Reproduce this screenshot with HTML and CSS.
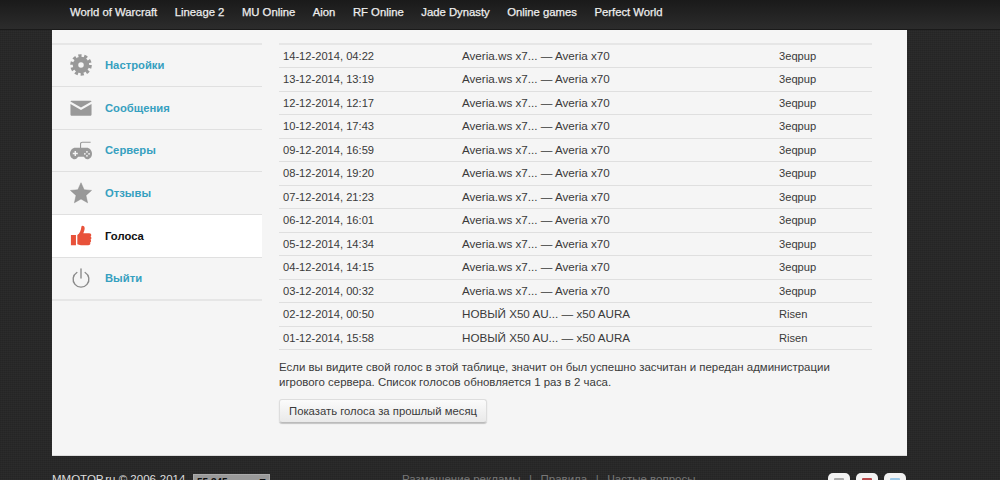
FILE: index.html
```html
<!DOCTYPE html>
<html lang="ru">
<head>
<meta charset="utf-8">
<title>MMOTOP</title>
<link rel="stylesheet" href="styles.css">
</head>
<body>
<header class="topbar">
  <nav class="topnav">
    <a>World of Warcraft</a><a>Lineage 2</a><a>MU Online</a><a>Aion</a><a>RF Online</a><a>Jade Dynasty</a><a>Online games</a><a>Perfect World</a>
  </nav>
</header>
<main class="panel">
  <aside class="side">
    <a class="side-item"><svg class="ico" viewBox="0 0 24 24"><circle cx="12" cy="12" r="9.900" fill="none" stroke="#999" stroke-width="3.800" stroke-dasharray="3.400 2.820"/><circle cx="12" cy="12" r="6" fill="none" stroke="#999" stroke-width="6"/></svg><span>Настройки</span></a>
    <a class="side-item"><svg class="ico" viewBox="0 0 24 24"><path fill="#999" d="M2 4h20c.8 0 1.500.4 1.500.8L12 11.500.5 4.800C.5 4.400 1.200 4 2 4zM.5 7.500 12 14.300l11.500-6.800V19c0 .8-.7 1.500-1.500 1.500H2C1.200 20.500.5 19.800.5 19z"/></svg><span>Сообщения</span></a>
    <a class="side-item"><svg class="ico" viewBox="0 0 24 24"><path fill="none" stroke="#999" stroke-width="1.200" d="M11.500 10V5.500c0-1.200.8-2 2-2h9"/><path fill="#999" fill-rule="evenodd" d="M6 9.500h12c3.500 0 6 3 6 6.500s-2.500 6-5 6c-2 0-2.800-1.500-4-2.700H9c-1.200 1.200-2 2.700-4 2.700-2.500 0-5-2.500-5-6s2.500-6.500 6-6.500zM5 13v2H3v1.500h2v2h1.500v-2h2V15h-2v-2zm13.500 0a1 1 0 1 0 0 2 1 1 0 0 0 0-2zm-2.300 2.200a1 1 0 1 0 0 2 1 1 0 0 0 0-2zm4.600 0a1 1 0 1 0 0 2 1 1 0 0 0 0-2zm-2.300 2.200a1 1 0 1 0 0 2 1 1 0 0 0 0-2z"/></svg><span>Серверы</span></a>
    <a class="side-item"><svg class="ico" viewBox="0 0 24 24"><path fill="#999" stroke="#888" stroke-width=".5" d="M12 .8l3.400 7.600 8.100.8-6.100 5.400 1.800 8.100-7.200-4.200-7.200 4.200 1.800-8.100L.5 9.200l8.100-.8z"/></svg><span>Отзывы</span></a>
    <a class="side-item active"><svg class="ico" viewBox="0 0 24 24"><path fill="#e8523a" d="M1 11h5.500v11H1zM8 11c2.500-2 4-5 4.500-9.500.2-1.300 3.500-1 3.500 2 0 2-.8 3.500-1.500 5.500h6.500c1.500 0 2.200 1 2.200 2 0 .8-.4 1.300-.8 1.600.7.400 1 1 1 1.700 0 .8-.5 1.400-1 1.700.4.400.6.900.6 1.500 0 .8-.5 1.300-1.100 1.600.2.300.3.700.3 1 0 1.200-1 1.900-2.200 1.900H12c-1.700 0-2.800-.7-4-1z"/></svg><span>Голоса</span></a>
    <a class="side-item"><svg class="ico" viewBox="0 0 24 24"><path fill="none" stroke="#8a8a8a" stroke-width="1.500" stroke-linecap="round" d="M12 2v10M7.500 6A8.600 8.600 0 1 0 16.500 6"/></svg><span>Выйти</span></a>
  </aside>
  <section class="content">
    <table class="votes">
      <tr><td>14-12-2014, 04:22</td><td class="srv">Averia.ws x7... — Averia x70</td><td>3eqpup</td></tr>
      <tr><td>13-12-2014, 13:19</td><td class="srv">Averia.ws x7... — Averia x70</td><td>3eqpup</td></tr>
      <tr><td>12-12-2014, 12:17</td><td class="srv">Averia.ws x7... — Averia x70</td><td>3eqpup</td></tr>
      <tr><td>10-12-2014, 17:43</td><td class="srv">Averia.ws x7... — Averia x70</td><td>3eqpup</td></tr>
      <tr><td>09-12-2014, 16:59</td><td class="srv">Averia.ws x7... — Averia x70</td><td>3eqpup</td></tr>
      <tr><td>08-12-2014, 19:20</td><td class="srv">Averia.ws x7... — Averia x70</td><td>3eqpup</td></tr>
      <tr><td>07-12-2014, 21:23</td><td class="srv">Averia.ws x7... — Averia x70</td><td>3eqpup</td></tr>
      <tr><td>06-12-2014, 16:01</td><td class="srv">Averia.ws x7... — Averia x70</td><td>3eqpup</td></tr>
      <tr><td>05-12-2014, 14:34</td><td class="srv">Averia.ws x7... — Averia x70</td><td>3eqpup</td></tr>
      <tr><td>04-12-2014, 14:15</td><td class="srv">Averia.ws x7... — Averia x70</td><td>3eqpup</td></tr>
      <tr><td>03-12-2014, 00:32</td><td class="srv">Averia.ws x7... — Averia x70</td><td>3eqpup</td></tr>
      <tr><td>02-12-2014, 00:50</td><td class="srv">НОВЫЙ X50 AU... — x50 AURA</td><td>Risen</td></tr>
      <tr><td>01-12-2014, 15:58</td><td class="srv">НОВЫЙ X50 AU... — x50 AURA</td><td>Risen</td></tr>
    </table>
    <p class="note">Если вы видите свой голос в этой таблице, значит он был успешно засчитан и передан администрации игрового сервера. Список голосов обновляется 1 раз в 2 часа.</p>
    <button class="btn">Показать голоса за прошлый месяц</button>
  </section>
</main>
<footer class="foot">
  <div class="copy">MMOTOP.ru © 2006-2014</div>
  <div class="counter">55 345<b>7</b></div>
  <div class="links"><span>Размещение рекламы</span><span>|</span><span>Правила</span><span>|</span><span>Частые вопросы</span></div>
  <div class="socials">
    <span class="soc"><i class="s-a"></i></span><span class="soc"><i class="s-b"></i></span><span class="soc"><i class="s-c"></i></span>
  </div>
</footer>
</body>
</html>
```
FILE: styles.css
```css
* { box-sizing: border-box; }
html, body { height: 480px; overflow: hidden; }
body {
  margin: 0;
  font-family: "Liberation Sans", Arial, sans-serif;
  font-size: 11px;
  color: #3a3a3a;
  background-color: #2c2c2c;
  background-image:
    linear-gradient(90deg, rgba(0,0,0,.07) 1px, transparent 1px),
    linear-gradient(rgba(0,0,0,.1) 1px, transparent 1px);
  background-size: 2px 2px;
}
.topbar {
  height: 30px;
  background: linear-gradient(#1a1a1a, #2c2c2c);
  border-bottom: 1px solid #1a1a1a;
}
.topnav { display: flex; gap: 17.5px; padding-left: 70px; }
.topnav a {
  font-size: 11.3px;
  line-height: 24px;
  color: #eee;
  -webkit-text-stroke: .25px #eee;
}
.panel {
  display: flex;
  width: 855px;
  height: 426px;
  margin-left: 52px;
  background: #f5f5f5;
  border-bottom: 1px solid #ddd;
  padding-top: 13px;
}
.side { width: 210px; flex: none; }
.side-item {
  display: flex;
  align-items: center;
  height: 42.8px;
  padding-left: 18px;
  border-bottom: 1px solid #e0e0e0;
  font-size: 11.25px;
  font-weight: 700;
  color: #36a0c0;
}
.side-item:first-child { height: 43.8px; border-top: 2px solid #e6e6e6; }
.side-item:last-child { border-bottom: 2px solid #e6e6e6; }
.side-item.active { background: #fff; color: #111; }
.ico { width: 22px; height: 22px; margin-right: 13px; flex: none; }
.content { width: 593px; margin-left: 17px; }
.votes { width: 593px; border-collapse: collapse; border-top: 2px solid #e6e6e6; table-layout: fixed; }
.votes td {
  height: 23.5px;
  padding: 4px 4px 0;
  vertical-align: baseline;
  border-bottom: 1px solid #dfdfdf;
  font-size: 11.15px;
  color: #3a3a3a;
}
.votes td:nth-child(1) { width: 179px; }
.votes td:nth-child(2) { width: 317px; }
.votes td.srv { font-size: 11.65px; }
.note { margin: 10px 0 0; font-size: 11.45px; line-height: 15px; color: #3a3a3a; }
.btn {
  display: block;
  margin-top: 9px;
  width: 208px;
  height: 24px;
  padding: 0;
  border: 1px solid #ddd;
  border-bottom-color: #bbb;
  border-radius: 3px;
  background: linear-gradient(#fbfbfb, #e9e9e9);
  box-shadow: 0 1px 1px rgba(0,0,0,.2);
  font: 11.3px "Liberation Sans", Arial, sans-serif;
  color: #3a3a3a;
}
.foot {
  display: flex;
  align-items: flex-start;
  padding: 17px 94px 0 52px;
  color: #ddd;
  font-size: 11.5px;
}
.copy { width: 141px; line-height: 15px; margin-top: -1px; }
.counter {
  width: 77px;
  height: 20px;
  margin-top: 1px;
  display: flex;
  justify-content: space-between;
  padding: 2px 3px;
  background: #999;
  border: 1px solid #aaa;
  color: #111;
  font-size: 10px;
  font-weight: 700;
}
.counter b { font-size: 12px; }
.links { display: flex; gap: 8.5px; margin-left: 132px; color: #777; line-height: 15px; margin-top: -1px; }
.socials { margin-left: auto; display: flex; gap: 6px; }
.soc { width: 22px; height: 23px; border-radius: 5px; background: #f2f2f2; padding: 5px 6px; }
.soc i { display: block; height: 8px; border-radius: 1px; }
.s-a { background: #aaa; }
.s-b { background: #b8484a; }
.s-c { background: #9cc8e6; }
```
